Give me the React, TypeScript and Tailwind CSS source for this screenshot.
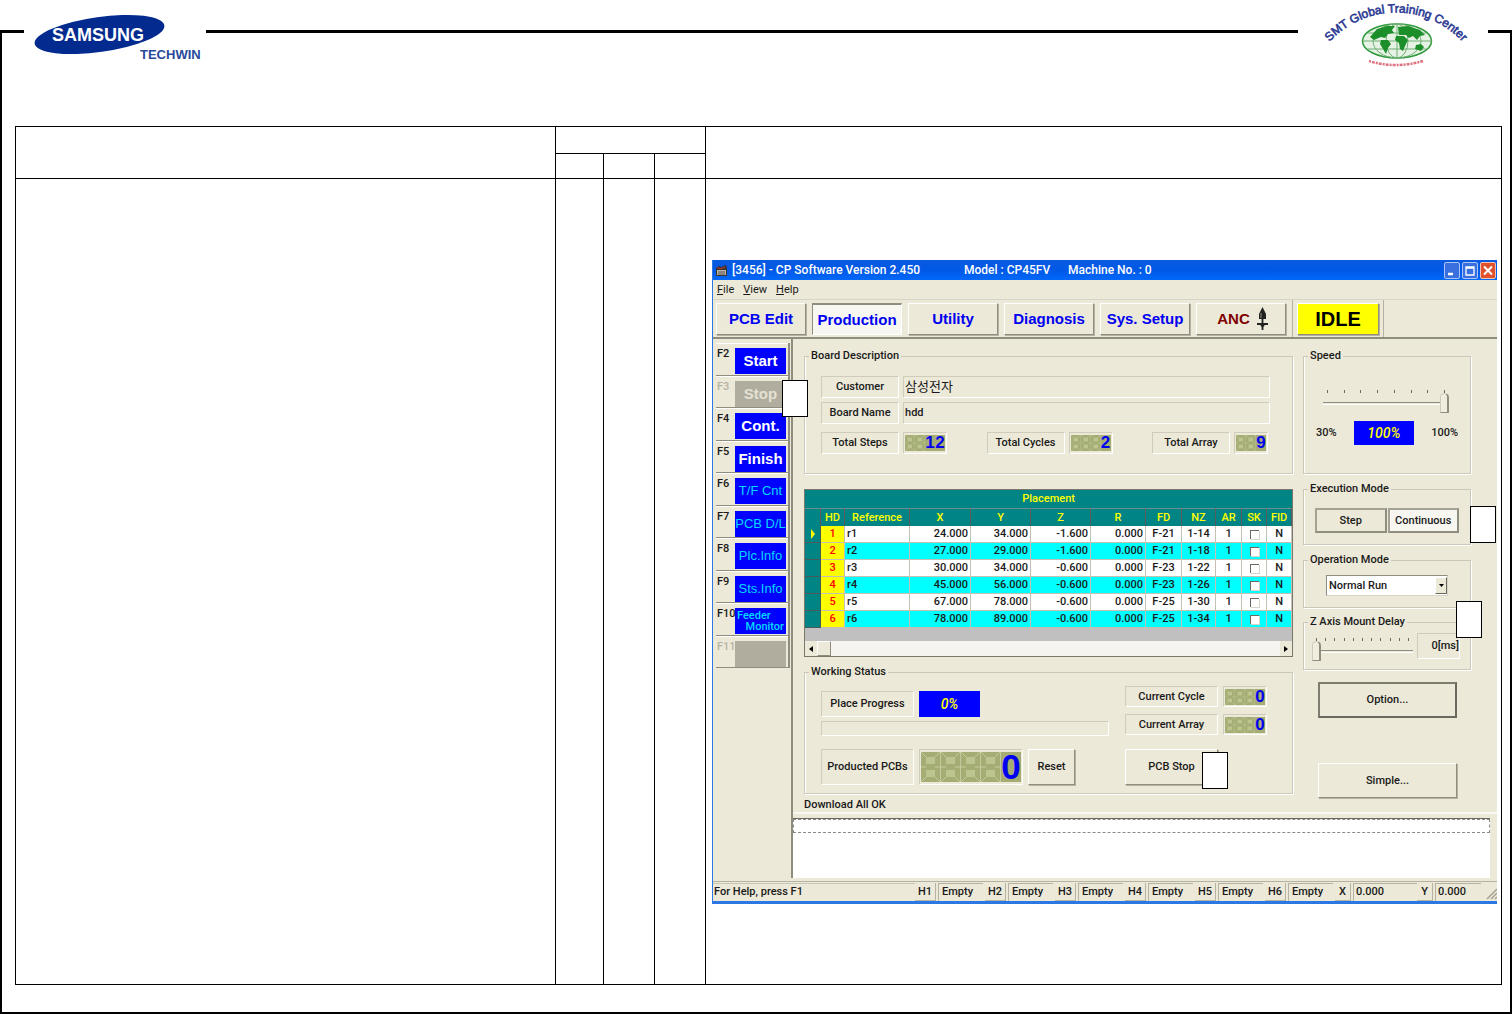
import type { ReactNode } from "react"
import clsx from "clsx"

const sideKeys = [
  { key: "F2", label: "Start", style: "main" },
  { key: "F3", label: "Stop", style: "off" },
  { key: "F4", label: "Cont.", style: "main" },
  { key: "F5", label: "Finish", style: "main" },
  { key: "F6", label: "T/F Cnt", style: "info" },
  { key: "F7", label: "PCB D/L", style: "info" },
  { key: "F8", label: "Plc.Info", style: "info" },
  { key: "F9", label: "Sts.Info", style: "info" },
  { key: "F10", label: "Feeder Monitor", style: "split" },
  { key: "F11", label: "", style: "off" },
]

const columns = [
  { name: "HD", width: "w-[24px]" },
  { name: "Reference", width: "w-[65px]" },
  { name: "X", width: "w-[61px]" },
  { name: "Y", width: "w-[60px]" },
  { name: "Z", width: "w-[60px]" },
  { name: "R", width: "w-[55px]" },
  { name: "FD", width: "w-[36px]" },
  { name: "NZ", width: "w-[34px]" },
  { name: "AR", width: "w-[26px]" },
  { name: "SK", width: "w-[25px]" },
  { name: "FID", width: "w-[25px]" },
]

const placements = [
  { ref: "r1", x: "24.000", y: "34.000", z: "-1.600", fd: "F-21", nz: "1-14" },
  { ref: "r2", x: "27.000", y: "29.000", z: "-1.600", fd: "F-21", nz: "1-18" },
  { ref: "r3", x: "30.000", y: "34.000", z: "-0.600", fd: "F-23", nz: "1-22" },
  { ref: "r4", x: "45.000", y: "56.000", z: "-0.600", fd: "F-23", nz: "1-26" },
  { ref: "r5", x: "67.000", y: "78.000", z: "-0.600", fd: "F-25", nz: "1-30" },
  { ref: "r6", x: "78.000", y: "89.000", z: "-0.600", fd: "F-25", nz: "1-34" },
]

const heads = ["H1", "H2", "H3", "H4", "H5", "H6"]

const sunken = "border border-[#d0ccbc] border-r-white border-b-white"
const raised = "border border-white border-r-[#8f8c80] border-b-[#8f8c80] shadow-[1px_1px_0_#b5b2a4]"

function SamsungLogo() {
  return (
    <svg width="182" height="64" viewBox="0 0 182 64" className="block">
      <ellipse cx="75.500" cy="34.500" rx="65.500" ry="17.500" transform="rotate(-8 75.500 34.500)" fill="#032b8f" />
      <text x="28" y="41" fill="#fff" fontSize="18" fontWeight="700" fontFamily="Liberation Sans, sans-serif">
        SAMSUNG
      </text>
      <text x="116" y="59" fill="#2a4a9c" fontSize="13" fontWeight="700" fontFamily="Liberation Sans, sans-serif">
        TECHWIN
      </text>
    </svg>
  )
}

function TrainingLogo() {
  return (
    <svg width="190" height="70" viewBox="0 0 190 70" className="block">
      <path id="arc" d="M28 46A90 90 0 0 1 168 46" fill="none" />
      <text fill="#2b3a93" stroke="#2b3a93" strokeWidth="0.600" fontSize="12" fontFamily="Liberation Sans, sans-serif">
        <textPath href="#arc" startOffset="50%" textAnchor="middle">
          SMT Global Training Center
        </textPath>
      </text>
      <ellipse cx="99" cy="41" rx="34.500" ry="17" fill="#e6f3e4" stroke="#2f9a3c" strokeWidth="1.500" />
      <g fill="none" stroke="#6fae74" strokeWidth="1">
        <ellipse cx="99" cy="41" rx="24" ry="17" />
        <ellipse cx="99" cy="41" rx="11" ry="17" />
        <path d="M65 41h69M70 33h58M70 49h58M99 24v34" />
      </g>
      <g fill="#1d8f2a">
        <path d="M79 29l10-3 8 0-3 4 2 3-6 1-3 4-4-1-7 3-4-3z" />
        <path d="M83 40l7 0 3 4-3 4-2 6-3-5-3-5z" />
        <path d="M100 27l10-1 12 4 5 5-5 1-3 4-4-4-4 2-3-3-7 0z" />
        <path d="M98 36l8 0 4 4-2 4-3 7-3-2-1-6-4-3z" />
        <path d="M118 45l5-1 3 3-3 4-6-2z" />
      </g>
      <path d="M71 61Q97 69 125 61" fill="none" stroke="#dd7580" strokeWidth="2.500" strokeDasharray="2 1 3 1" />
    </svg>
  )
}

// unlit seven segment cell
function Ghost() {
  return (
    <svg viewBox="0 0 20 30" preserveAspectRatio="none" className="h-full w-full">
      <rect width="20" height="30" fill="#a5ad74" />
      <rect x="5" y="5" width="9" height="7" fill="#bcc48f" />
      <rect x="5" y="18" width="9" height="7" fill="#bcc48f" />
      <path d="M0 0l5 5M19 0l-5 5M0 15h5M14 15h5M0 30l5-5M19 30l-5-5M19.500 0v30" stroke="#c3ca9b" fill="none" />
    </svg>
  )
}

function Lcd({ value, cells, big }: { value: string; cells: number; big?: boolean }) {
  const blanks = cells - value.length
  return (
    <output className={clsx("flex items-center p-px font-['Liberation_Sans',sans-serif]", sunken)}>
      {Array.from({ length: cells }, (_, i) => (
        <span
          key={i}
          className={clsx(
            "flex items-center justify-center bg-[#a5ad74] font-bold text-[#0000f0]",
            big ? "h-[30px] w-5 text-[35px] leading-8" : "h-4 w-[10px] text-[17px] leading-4"
          )}
        >
          {i < blanks ? <Ghost /> : value[i - blanks]}
        </span>
      ))}
    </output>
  )
}

function Caption({ children, className }: { children: ReactNode; className: string }) {
  return <span className={clsx("flex shrink-0 items-center justify-center", sunken, className)}>{children}</span>
}

function Group({ title, className, inner, children }: { title: string; className?: string; inner?: string; children: ReactNode }) {
  return (
    <fieldset className={clsx("min-w-0 border border-[#cbc8ba] shadow-[inset_1px_0_0_#fff,1px_1px_0_#fff]", className)}>
      <legend className="ml-1 px-[2px] leading-[14px]">{title}</legend>
      <div className={inner}>{children}</div>
    </fieldset>
  )
}

function Callout({ className }: { className: string }) {
  return <span className={clsx("absolute z-10 h-[37px] w-[26px] border border-black bg-white", className)} />
}

function Slider({ ticks, label, value, className }: { ticks: number; label: string; value: number; className: string }) {
  return (
    <div className={className}>
      <div className="flex justify-between px-1">
        {Array.from({ length: ticks }, (_, i) => (
          <span key={i} className="h-[3px] w-px bg-[#6b695f]" />
        ))}
      </div>
      <input
        type="range"
        aria-label={label}
        defaultValue={value}
        className="block h-5 w-full appearance-none bg-transparent [&::-webkit-slider-runnable-track]:h-[3px] [&::-webkit-slider-runnable-track]:border-t [&::-webkit-slider-runnable-track]:border-b [&::-webkit-slider-runnable-track]:border-t-[#8f8c80] [&::-webkit-slider-runnable-track]:border-b-white [&::-webkit-slider-thumb]:-mt-[10px] [&::-webkit-slider-thumb]:h-5 [&::-webkit-slider-thumb]:w-[9px] [&::-webkit-slider-thumb]:appearance-none [&::-webkit-slider-thumb]:rounded-t-full [&::-webkit-slider-thumb]:border [&::-webkit-slider-thumb]:border-r-2 [&::-webkit-slider-thumb]:border-[#d0ccbc] [&::-webkit-slider-thumb]:border-r-[#8f8c80] [&::-webkit-slider-thumb]:border-b-[#8f8c80] [&::-webkit-slider-thumb]:bg-[#f0eddf]"
      />
    </div>
  )
}

function TitleBar() {
  return (
    <div className="flex h-5 items-center bg-gradient-to-b from-[#0a5be0] via-[#0058e6] to-[#0068fa] pr-px pl-[2px] text-[12px] text-white">
      <svg width="13" height="13" viewBox="0 0 13 13" className="mr-1">
        <path d="M1 4l3-2 2 1 5-2 1 3v8H1z" fill="#3a3434" />
        <path d="M2 6h9v5H2z" fill="#b9b4a8" />
        <path d="M2 3l3 2 5-2" stroke="#c23a2a" fill="none" />
        <path d="M3 8h7M3 10h7" stroke="#5a5550" />
      </svg>
      <span className="w-[232px]">[3456] - CP Software Version 2.450</span>
      <span className="w-[104px]">Model : CP45FV</span>
      <span className="flex-1">Machine No. : 0</span>
      <div className="flex gap-[2px]">
        <button aria-label="Minimize" className="h-[17px] w-4 rounded-[2px] border border-[#a9c4f5] bg-[#3a6fe0]">
          <svg viewBox="0 0 14 15">
            <path d="M3 11h5" stroke="#fff" strokeWidth="2.500" />
          </svg>
        </button>
        <button aria-label="Maximize" className="h-[17px] w-4 rounded-[2px] border border-[#a9c4f5] bg-[#3a6fe0]">
          <svg viewBox="0 0 14 15">
            <path d="M3 4h8v8H3zM3 5h8" stroke="#fff" fill="none" strokeWidth="1.300" />
          </svg>
        </button>
        <button aria-label="Close" className="h-[17px] w-4 rounded-[2px] border border-[#f3c3b4] bg-[#e0512d]">
          <svg viewBox="0 0 14 15">
            <path d="M3 3.500l8 8M11 3.500l-8 8" stroke="#fff" strokeWidth="2" />
          </svg>
        </button>
      </div>
    </div>
  )
}

function Toolbar() {
  const tab = "flex h-8 w-[90px] items-center justify-center text-[15px] font-bold"
  return (
    <nav className="flex h-10 gap-[6px] border-t border-b-2 border-t-[#d8d5c8] border-b-[#8f8c80] pt-[3px] pl-[3px] font-['Liberation_Sans',sans-serif]">
      <button className={clsx(tab, raised, "text-[#0000f0]")}>PCB Edit</button>
      <button className={clsx(tab, "border border-t-2 border-white border-t-[#8f8c80] border-l-[#8f8c80] bg-[#f7f6f0] text-[#0000f0]")}>
        Production
      </button>
      <button className={clsx(tab, raised, "text-[#0000f0]")}>Utility</button>
      <button className={clsx(tab, raised, "text-[#0000f0]")}>Diagnosis</button>
      <button className={clsx(tab, raised, "text-[#0000f0]")}>Sys. Setup</button>
      <button className={clsx(tab, raised, "gap-[6px] pl-1 text-[#800000]")}>
        ANC
        <svg width="13" height="24" viewBox="0 0 13 24">
          <path d="M6.500 0L10 7v5H3V7z" fill="#222" />
          <path d="M6.500 10v13M1 17h11" stroke="#222" strokeWidth="1.800" />
          <path d="M3.500 17l3 4 3-4z" fill="#222" />
          <path d="M5 6v5" stroke="#8f8c80" />
        </svg>
      </button>
      <div className="-mt-[3px] border-x border-[#b5b2a4] px-1 pt-[3px]">
        <output className={clsx("flex h-8 w-[82px] items-center justify-center bg-[#ffff00] text-[20px] font-bold text-black", raised)}>
          IDLE
        </output>
      </div>
    </nav>
  )
}

function Sidebar() {
  return (
    <aside className="w-[80px] shrink-0 border-r-2 border-[#8f8c80] pt-1">
      <div className="grid h-[325px] w-[77px] grid-rows-10 border-r-2 border-[#8f8c80] pl-[3px]">
        {sideKeys.map((item) => (
          <div key={item.key} className="relative flex border-b border-[#8f8c80] pt-[5px] shadow-[inset_0_1px_0_#fff]">
            <span className={clsx("-mt-px w-[19px] pl-px leading-[13px]", item.style === "off" && "text-[#b5b2a4]")}>{item.key}</span>
            <button
              aria-label={item.label || item.key}
              disabled={item.style === "off"}
              className={clsx(
                "h-[26px] w-[51px] shrink-0",
                item.style !== "split" && "font-['Liberation_Sans',sans-serif]",
                item.style === "off" && "bg-[#b0ad9f] text-[15px] font-bold text-[#e4e1d3]",
                item.style === "main" && "bg-[#0000ff] text-[15px] font-bold text-white",
                item.style === "info" && "bg-[#0000ff] text-[13px] whitespace-nowrap text-[#00d8ff]",
                item.style === "split" && "bg-[#0000ff] px-[2px] text-[11px] leading-[11px] text-[#00d8ff]"
              )}
            >
              {item.style === "split" ? (
                <>
                  <span className="block text-left">Feeder</span>
                  <span className="block text-right">Monitor</span>
                </>
              ) : (
                item.label
              )}
            </button>
            {item.key === "F3" && <Callout className="top-1 left-[66px]" />}
          </div>
        ))}
      </div>
    </aside>
  )
}

function BoardDescription() {
  return (
    <Group title="Board Description" className="h-[125px]" inner="pr-[22px] pl-4">
      <div className="mt-[13px] flex flex-col gap-1">
        <label className="flex h-[22px] gap-1">
          <Caption className="w-[78px]">Customer</Caption>
          <input readOnly defaultValue="삼성전자" className={clsx("min-w-0 flex-1 pl-px text-[13px] font-normal", sunken)} />
        </label>
        <label className="flex h-[22px] gap-1">
          <Caption className="w-[78px]">Board Name</Caption>
          <input readOnly defaultValue="hdd" className={clsx("min-w-0 flex-1 pl-px", sunken)} />
        </label>
      </div>
      <div className="mt-2 flex h-[22px] justify-between pr-[2px]">
        <div className="flex gap-1">
          <Caption className="w-[78px]">Total Steps</Caption>
          <Lcd value="12" cells={4} />
        </div>
        <div className="flex gap-1">
          <Caption className="w-[78px]">Total Cycles</Caption>
          <Lcd value="2" cells={4} />
        </div>
        <div className="flex gap-1">
          <Caption className="w-[78px]">Total Array</Caption>
          <Lcd value="9" cells={3} />
        </div>
      </div>
    </Group>
  )
}

function PlacementTable() {
  const head = "border-t border-r border-[#5a5a5a] border-t-[#6d8f8f] p-0 font-medium"
  const cell = "border-r border-b border-[#c4c1b4] p-0"
  return (
    <div className="mt-[15px] border border-[#7a776c] bg-[#c0c0c0]">
      <table className="w-full table-fixed border-separate border-spacing-0 leading-4">
        <colgroup>
          <col className="w-4" />
          {columns.map((col) => (
            <col key={col.name} className={col.width} />
          ))}
        </colgroup>
        <thead className="bg-[#008484] text-[#ffff00]">
          <tr className="h-[18px]">
            <th colSpan={12} className="p-0 font-medium">
              Placement
            </th>
          </tr>
          <tr className="h-[18px]">
            <th className={head} />
            {columns.map((col) => (
              <th key={col.name} className={head}>
                {col.name}
              </th>
            ))}
          </tr>
        </thead>
        <tbody>
          {placements.map((row, i) => (
            <tr key={row.ref} className={clsx("h-[17px] text-center", i % 2 ? "bg-[#00ffff]" : "bg-white")}>
              <td className="border-r border-b border-[#4a5a5a] bg-[#008484] p-0">
                {i === 0 && (
                  <svg width="6" height="10" viewBox="0 0 6 10" className="mx-auto">
                    <path d="M1 0l4 5-4 5z" fill="#ffff00" />
                  </svg>
                )}
              </td>
              <td className={clsx(cell, "bg-[#ffff00] text-[#ff0000]")}>{i + 1}</td>
              <td className={clsx(cell, "pl-[2px] text-left")}>{row.ref}</td>
              <td className={clsx(cell, "pr-[2px] text-right")}>{row.x}</td>
              <td className={clsx(cell, "pr-[2px] text-right")}>{row.y}</td>
              <td className={clsx(cell, "pr-[2px] text-right")}>{row.z}</td>
              <td className={clsx(cell, "pr-[2px] text-right")}>0.000</td>
              <td className={cell}>{row.fd}</td>
              <td className={cell}>{row.nz}</td>
              <td className={cell}>1</td>
              <td className={cell}>
                <input
                  type="checkbox"
                  aria-label={`Skip ${row.ref}`}
                  className="mx-auto block h-[9px] w-[9px] appearance-none border-t border-l border-[#6b695f] bg-white shadow-[1px_1px_0_#d8d5c8]"
                />
              </td>
              <td className={cell}>N</td>
            </tr>
          ))}
        </tbody>
      </table>
      <div className="mt-[13px] flex h-[15px] items-center bg-[#f5f4ee]">
        <button aria-label="Scroll left" className="flex h-full w-3 items-center justify-center bg-[#ece9d8]">
          <svg width="4" height="6" viewBox="0 0 4 6">
            <path d="M4 0v6L0 3z" />
          </svg>
        </button>
        <span className="h-full w-[14px] border border-white border-r-[#8f8c80] border-b-[#8f8c80] bg-[#ece9d8]" />
        <span className="flex-1" />
        <button aria-label="Scroll right" className="flex h-full w-3 items-center justify-center bg-[#ece9d8]">
          <svg width="4" height="6" viewBox="0 0 4 6">
            <path d="M0 0v6L4 3z" />
          </svg>
        </button>
      </div>
    </div>
  )
}

function WorkingStatus() {
  return (
    <Group title="Working Status" className="mt-2 h-[129px]" inner="flex gap-4 pr-[25px] pl-4">
      <div className="flex flex-1 flex-col pt-3">
        <div className="flex h-[26px] items-stretch gap-[5px]">
          <Caption className="w-[93px]">Place Progress</Caption>
          <output className="flex w-[61px] items-center justify-center bg-[#0000ff] text-[14px] text-[#ffff00] italic">0%</output>
        </div>
        <div className={clsx("mt-1 h-[15px]", sunken)} />
        <div className="mt-[13px] flex h-9 gap-[5px]">
          <Caption className="w-[93px]">Producted PCBs</Caption>
          <Lcd value="0" cells={5} big />
          <button className={clsx("w-[47px]", raised)}>Reset</button>
        </div>
      </div>
      <div className="flex flex-col pt-[7px]">
        <div className="flex h-[21px] gap-[5px]">
          <Caption className="w-[93px]">Current Cycle</Caption>
          <Lcd value="0" cells={4} />
        </div>
        <div className="mt-[7px] flex h-[21px] gap-[5px]">
          <Caption className="w-[93px]">Current Array</Caption>
          <Lcd value="0" cells={4} />
        </div>
        <div className="relative mt-[14px] h-9 w-[93px]">
          <button className={clsx("h-full w-full", raised)}>PCB Stop</button>
          <Callout className="top-[3px] left-[77px]" />
        </div>
      </div>
    </Group>
  )
}

function ControlPanel() {
  return (
    <div className="w-[168px] shrink-0">
      <Group title="Speed" className="h-[125px]" inner="px-3">
        <Slider ticks={8} label="Speed" value={100} className="mt-[27px] ml-[7px] w-[126px]" />
        <div className="mt-2 flex items-center justify-between">
          <span>30%</span>
          <output className="flex h-6 w-[60px] items-center justify-center bg-[#0000ff] text-[14px] text-[#ffff00] italic">100%</output>
          <span>100%</span>
        </div>
      </Group>
      <div className="relative mt-2">
        <Group title="Execution Mode" className="h-[63px]" inner="px-[11px]">
          <div className="mt-3 flex gap-px">
            <button className="h-[25px] flex-1 border-2 border-[#8f8c80] border-t-[#a5a295] border-l-[#a5a295]">Step</button>
            <button className="h-[25px] flex-1 border-2 border-[#8f8c80] border-t-[#a5a295] border-l-[#a5a295] bg-[#f7f6f0]">Continuous</button>
          </div>
        </Group>
        <Callout className="top-6 -right-[25px]" />
      </div>
      <Group title="Operation Mode" className="mt-2 h-[55px]" inner="px-[22px]">
        <div className="relative mt-2 h-[21px]">
          <select
            aria-label="Operation Mode"
            className="block h-full w-full appearance-none border border-[#8f8c80] border-r-[#d8d5c8] border-b-[#d8d5c8] bg-white pl-[2px]"
          >
            <option>Normal Run</option>
          </select>
          <span className="pointer-events-none absolute top-[2px] right-px flex h-[17px] w-3 items-center justify-center border border-white border-r-[#6b695f] border-b-[#6b695f] bg-[#ece9d8]">
            <svg width="5" height="3" viewBox="0 0 5 3">
              <path d="M0 0h5L2.500 3z" />
            </svg>
          </span>
        </div>
      </Group>
      <div className="relative mt-[7px]">
        <Group title="Z Axis Mount Delay" className="h-[55px]" inner="pr-[10px] pl-2">
          <div className="mt-1 flex items-start justify-between">
            <Slider ticks={11} label="Z Axis Mount Delay" value={0} className="mt-[5px] w-[101px]" />
            <output className={clsx("flex h-[26px] w-[43px] items-center justify-end", sunken)}>0[ms]</output>
          </div>
        </Group>
        <Callout className="-top-[14px] -right-[11px]" />
      </div>
      <div className="flex flex-col pr-[14px] pl-[15px]">
        <button className="mt-3 h-9 border-2 border-[#6b695f] border-t-[#7f7c70] border-l-[#7f7c70]">Option...</button>
        <button className={clsx("mt-[45px] h-[35px]", raised)}>Simple...</button>
      </div>
    </div>
  )
}

function StatusBar() {
  const slot = "h-full border-t border-l border-[#b5b2a4]"
  return (
    <footer className="mt-[3px] flex h-5 items-center border-t border-[#b5b2a4] pt-px leading-4">
      <span className="h-full flex-1 border-t border-[#c9c6b8] pl-px">For Help, press F1</span>
      {heads.map((h) => (
        <div key={h} className="flex h-full w-[70px]">
          <span className="mr-[2px] h-full w-[21px] border-r border-b border-[#b5b2a4] pt-px text-center">{h}</span>
          <span className={clsx(slot, "w-[45px] pl-[3px]")}>Empty</span>
        </div>
      ))}
      <span className="h-full w-4 border-r border-b border-[#b5b2a4] pt-px text-center">X</span>
      <span className={clsx(slot, "ml-[2px] w-[64px] pl-[2px]")}>0.000</span>
      <span className="h-full w-4 border-r border-b border-[#b5b2a4] pt-px text-center">Y</span>
      <span className={clsx(slot, "ml-[2px] w-[46px] pl-[2px]")}>0.000</span>
      <svg width="16" height="18" viewBox="0 0 16 18">
        <path d="M16 6L6 16M16 10l-6 6M16 14l-2 2" stroke="#a5a295" strokeWidth="1.500" />
      </svg>
    </footer>
  )
}

function MachineWindow() {
  return (
    <div className="border-b-[3px] border-l border-[#2b78e4] bg-[#ece9d8] font-[Roboto,'Noto_Sans_CJK_KR',sans-serif] text-[11px] leading-[14px] font-medium text-[#1a1a1a]">
      <TitleBar />
      <div className="flex h-[19px] items-center gap-[9px] pl-1 font-normal">
        <button><u>F</u>ile</button>
        <button><u>V</u>iew</button>
        <button><u>H</u>elp</button>
      </div>
      <Toolbar />
      <div className="flex">
        <Sidebar />
        <div className="min-w-0 flex-1">
          <div className="flex gap-[10px] border-b-2 border-[#f8f7f1] pt-[10px] pr-[26px] pl-[11px]">
            <div className="min-w-0 flex-1">
              <BoardDescription />
              <PlacementTable />
              <WorkingStatus />
              <p className="pt-1">Download All OK</p>
            </div>
            <ControlPanel />
          </div>
          <div className="mt-1 mr-[7px] h-[60px] border-t border-[#6b695f] bg-white">
            <div className="h-[14px] border border-dashed border-[#8a8a8a]" />
          </div>
        </div>
      </div>
      <StatusBar />
    </div>
  )
}

export default function App() {
  return (
    <main className="relative flex min-h-screen flex-col bg-white pt-[30px] font-['Liberation_Sans',sans-serif]">
      <div className="absolute top-0 left-6 bg-white">
        <SamsungLogo />
      </div>
      <div className="absolute top-0 right-6 bg-white">
        <TrainingLogo />
      </div>
      <div className="flex-1 border-x-2 border-t-[3px] border-b-2 border-black pt-[93px] pr-2 pb-[27px] pl-[13px]">
        <table className="w-full table-fixed border-collapse [&>tbody>tr>td]:border [&>tbody>tr>td]:border-black [&>tbody>tr>td]:p-0">
          <colgroup>
            <col className="w-[540px]" />
            <col className="w-12" />
            <col className="w-[51px]" />
            <col className="w-[51px]" />
            <col />
          </colgroup>
          <tbody>
            <tr className="h-[27px]">
              <td rowSpan={2} />
              <td colSpan={3} />
              <td rowSpan={2} />
            </tr>
            <tr className="h-[25px]">
              <td />
              <td />
              <td />
            </tr>
            <tr>
              <td />
              <td />
              <td />
              <td />
              <td>
                <div className="pt-[81px] pr-1 pb-20 pl-[6px]">
                  <MachineWindow />
                </div>
              </td>
            </tr>
          </tbody>
        </table>
      </div>
    </main>
  )
}
